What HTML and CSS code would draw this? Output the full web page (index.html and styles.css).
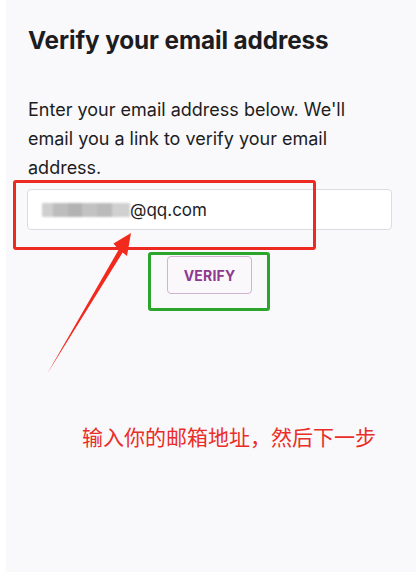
FILE: index.html
```html
<!DOCTYPE html>
<html lang="zh">
<head>
<meta charset="utf-8">
<title>Verify your email address</title>
<link rel="stylesheet" href="styles.css">
</head>
<body>
<div class="screen">
  <h1 class="title">Verify your email address</h1>
  <p class="lead">Enter your email address below. We'll email you a link to verify your email address.</p>
  <div class="field"><span class="mosaic"></span><span class="email">@qq.com</span></div>
  <div class="actions"><button class="verify" type="button">VERIFY</button></div>

  <div class="mark mark-red"></div>
  <div class="mark mark-green"></div>
  <svg class="arrow" width="416" height="573" viewBox="0 0 416 573" aria-hidden="true">
    <polygon points="131,233 127,256 122.6,252.6 47,374 118.6,249.8 113.5,243.5" fill="#f22a1e"/>
  </svg>
  <div class="note">输入你的邮箱地址，然后下一步</div>
</div>
</body>
</html>
```
FILE: styles.css
```css
html, body {
  margin: 0;
  padding: 0;
  background: #ffffff;
}
.screen {
  position: relative;
  margin-left: 6px;
  height: 572px;
  background: #f9f8fb;
  padding: 25px 24px 0 21px;
  box-sizing: border-box;
  font-family: Inter, "Liberation Sans", sans-serif;
  color: #1d1d1f;
}
.title {
  margin: 0 0 0 1px;
  font-size: 24.3px;
  line-height: 30px;
  font-weight: 700;
  letter-spacing: -0.1px;
}
.lead {
  margin: 40px 0 0 1px;
  font-size: 18px;
  line-height: 29px;
  font-weight: 400;
}
.field {
  margin-top: 7px;
  height: 41px;
  box-sizing: border-box;
  background: #ffffff;
  border: 1px solid #dcdcdf;
  border-radius: 4px;
  display: flex;
  align-items: center;
  padding-left: 14px;
  font-size: 17px;
  color: #1d1d1f;
}
.mosaic {
  width: 88px;
  height: 14px;
  background: linear-gradient(90deg, #cfcfcf 0 12%, #bdbdbd 12% 30%, #b3b3b3 30% 45%, #c2c2c2 45% 62%, #bababa 62% 80%, #d0d0d0 80% 100%);
  filter: blur(0.8px);
}
.actions {
  display: flex;
  justify-content: center;
  margin-top: 26px;
}
.verify {
  width: 85px;
  height: 38px;
  background: #faf8fb;
  border: 1px solid #d2b3d2;
  border-radius: 4px;
  color: #8e3a8e;
  font-family: Inter, "Liberation Sans", sans-serif;
  font-weight: 700;
  font-size: 14px;
  letter-spacing: 0.2px;
  padding: 0;
}
.mark {
  position: absolute;
  box-sizing: border-box;
  border-radius: 3px;
}
.mark-red {
  left: 7px;
  top: 180px;
  width: 303px;
  height: 70px;
  border: 3px solid #ec2a22;
}
.mark-green {
  left: 142px;
  top: 252px;
  width: 122px;
  height: 59px;
  border: 3px solid #2ca52c;
}
.arrow {
  position: absolute;
  left: -6px;
  top: 0;
}
.note {
  position: absolute;
  left: 76px;
  top: 422px;
  font-family: "Noto Sans CJK SC", sans-serif;
  font-size: 21px;
  line-height: 28px;
  color: #ea2e27;
  font-weight: 400;
}
```
